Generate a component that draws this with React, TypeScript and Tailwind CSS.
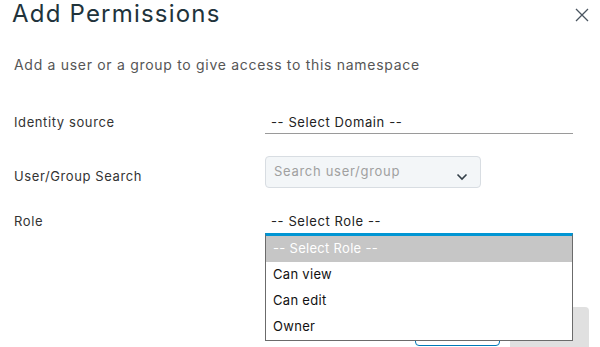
import React from "react";

export default function App() {
  return (
    <div
      className="relative w-[600px] h-[347px] bg-white overflow-hidden"
      style={{ fontFamily: "Inter, 'Noto Sans', sans-serif" }}
    >
      <div className="flex items-start justify-between pl-[12px] pr-[11px] pt-[0px]">
        <h1 className="text-[24px] leading-[28px] text-[#21333b] font-normal tracking-[1.2px]">
          Add Permissions
        </h1>
        <svg width="14" height="14" viewBox="0 0 14 14" className="mt-[8px]" fill="none" stroke="#4a5560" strokeWidth="1.3">
          <path d="M1 1 L13 13 M13 1 L1 13" />
        </svg>
      </div>
      <p className="pl-[14px] mt-[28px] text-[14px] leading-[18px] text-[#565656] tracking-[0.7px]">
        Add a user or a group to give access to this namespace
      </p>

      <div className="pl-[14px] mt-[36px] grid grid-cols-[251px_308px] items-center text-[13px] text-[#333] tracking-[0.6px]">
        <div className="leading-[18px]">Identity source</div>
        <div className="border-b border-[#9a9a9a] h-[24px] pl-[6px] pt-[3px] text-[#222] leading-[18px]">
          -- Select Domain --
        </div>

        <div className="mt-[30px] leading-[18px]">User/Group Search</div>
        <div className="mt-[22px]">
          <div className="w-[216px] h-[32px] rounded-[4px] border border-[#d8dde2] bg-[#f3f6f8] flex items-center justify-between pl-[8px] pr-[12px]">
            <span className="text-[#a0a0a0] text-[13px] tracking-[0.7px]">Search user/group</span>
            <svg width="12" height="8" viewBox="0 0 12 8" className="mt-[10px]" fill="none" stroke="#333f48" strokeWidth="1.6">
              <path d="M1.5 1.5 L6 6 L10.5 1.5" />
            </svg>
          </div>
        </div>

        <div className="mt-[24px] leading-[18px]">Role</div>
        <div className="mt-[24px] pl-[6px] leading-[18px] text-[#222]">-- Select Role --</div>
      </div>

      <div className="absolute top-[307px] left-[415px] flex gap-[10px]">
        <div className="w-[85px] h-[39px] rounded-[4px] border border-[#0079b8]"></div>
        <div className="w-[79px] h-[45px] rounded-[4px] bg-[#e0e0e0]"></div>
      </div>

      <div className="absolute left-[265px] top-[233px] w-[308px] border-t-[3px] border-t-[#0095d3] border-x border-b border-x-[#6b6b6b] border-b-[#6b6b6b] bg-white text-[13px] text-[#111] tracking-[0.3px]">
        <div className="h-[26px] bg-[#c6c6c6] text-white pl-[7px] flex items-center">-- Select Role --</div>
        <div className="h-[26px] pl-[7px] flex items-center">Can view</div>
        <div className="h-[26px] pl-[7px] flex items-center">Can edit</div>
        <div className="h-[26px] pl-[7px] flex items-center">Owner</div>
      </div>
    </div>
  );
}
